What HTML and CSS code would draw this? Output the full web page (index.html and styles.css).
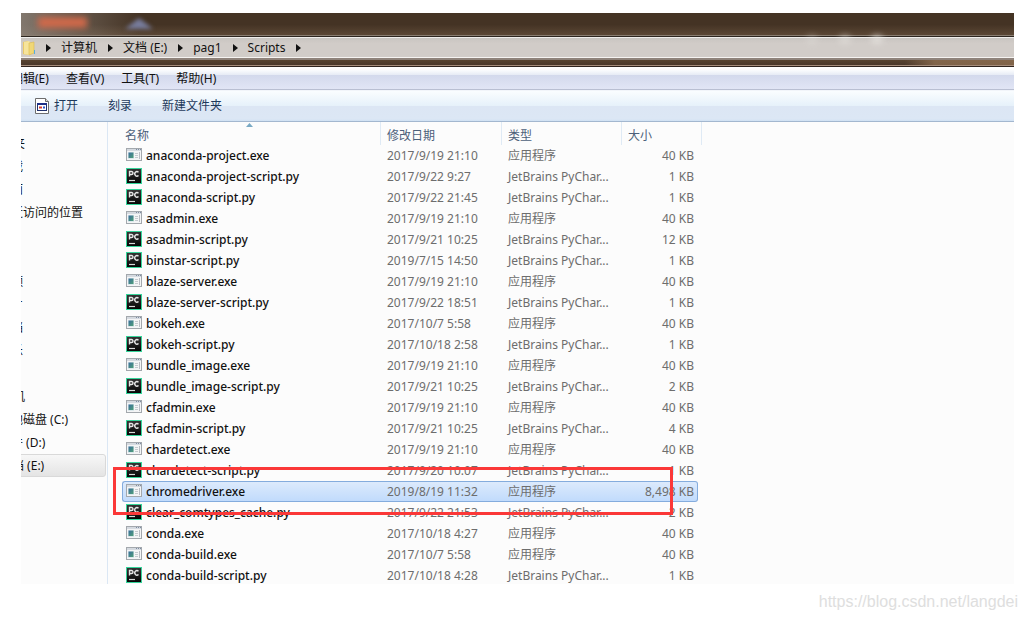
FILE: index.html
```html
<!DOCTYPE html>
<html lang="zh-CN">
<head>
<meta charset="utf-8">
<title>Scripts</title>
<link rel="stylesheet" href="styles.css">
</head>
<body>
<svg class="defs" aria-hidden="true">
  <defs>
    <linearGradient id="pane" x1="0" y1="0" x2="1" y2="1"><stop offset="0" stop-color="#3a6d9c"/><stop offset="1" stop-color="#4f9f78"/></linearGradient>
    <linearGradient id="dark" x1="0" y1="0" x2="0" y2="1"><stop offset="0" stop-color="#343434"/><stop offset="1" stop-color="#050505"/></linearGradient>
  </defs>
  <symbol id="exe" viewBox="0 0 16 16">
    <rect x=".5" y="1.5" width="15" height="12" fill="#f4f5f6" stroke="#a3a8ad"/>
    <path d="M1 2h14v2H1z" fill="#d5dae0"/>
    <path d="M10 2.500h1m1 0h1m1 0h1" stroke="#7e8da3"/>
    <path d="M2 5h6v7H2z" fill="#dce8ec"/>
    <path d="M2.500 5.500h5v5.500h-5z" fill="url(#pane)"/>
    <path d="M9 6.500h3M9 8.500h3M9 10.500h3" stroke="#c5cacf"/>
    <path d="M13.500 5v7" stroke="#b8bdc4"/>
  </symbol>
  <symbol id="py" viewBox="0 0 16 16">
    <rect width="16" height="16" fill="#35d49a"/>
    <rect x="1" y="1" width="14" height="14" fill="url(#dark)"/>
    <path d="M3.500 8.500v-5h2a1.500 1.500 0 0 1 0 3h-2M12.500 4.300a2.200 2.200 0 1 0 0 3.200" fill="none" stroke="#e6e6e6" stroke-width="1.400"/>
    <path d="M3 12.500h6" stroke="#d9d9d9" stroke-width="1.200"/>
  </symbol>
</svg>
<main class="window">
  <header class="glass">
    <span class="blob orange"></span><span class="blue"><span></span></span><span class="glow g1"></span><span class="glow g2"></span><span class="glow g3"></span>
  </header>
  <nav class="address" aria-label="地址">
    <svg class="folder" viewBox="0 0 13 16" aria-hidden="true"><path d="M0 2l5-1v14l-5-1z" fill="#e9c967"/><path d="M1 2l5-1 1 1v13l-6-1z" fill="#f6e49b"/><path d="M6 3l5-1v11l-5 2z" fill="#f0d777" stroke="#dcb94e" stroke-width=".6"/><path d="M11 10h1v4h-1z" fill="#58aee0"/></svg>
    <i class="arrow"></i><a href="#">计算机</a>
    <i class="arrow"></i><a href="#">文档 (E:)</a>
    <i class="arrow"></i><a href="#">pag1</a>
    <i class="arrow"></i><a href="#">Scripts</a>
    <i class="arrow"></i>
  </nav>
  <div class="frame"></div>
  <div class="menubar">
    <button>编辑(E)</button><button>查看(V)</button><button>工具(T)</button><button>帮助(H)</button>
  </div>
  <div class="toolbar">
    <button><svg class="open" viewBox="0 0 14 16" aria-hidden="true"><path d="M.5.500h10l3 3v12H.5z" fill="#fff" stroke="#6d6d6d"/><path d="M10.500.500v3h3" fill="#ddd" stroke="#6d6d6d"/><rect x="2.500" y="5.500" width="9" height="7" fill="#fff" stroke="#20306c"/><path d="M2 6h10" stroke="#1d2f86" stroke-width="2"/><path d="M4 9.500h3" stroke="#d23c32" stroke-width="2"/><path d="M8 9.500h2" stroke="#2d56c8" stroke-width="2"/></svg>打开</button><button>刻录</button><button>新建文件夹</button>
  </div>
  <div class="content">
    <aside class="tree">
      <ul class="favorites">
        <li class="root">夹</li><li>载</li><li>面</li><li>近访问的位置</li>
      </ul>
      <ul class="libraries"><li>频</li><li>片</li><li>档</li><li>乐</li></ul>
      <ul class="computer">
        <li class="root">机</li><li>地磁盘 (C:)</li><li>件 (D:)</li><li class="current">档 (E:)</li>
      </ul>
    </aside>
    <section class="listing">
      <svg class="sort" viewBox="0 0 7 4" aria-hidden="true"><path d="M0 4l3.500-4L7 4z" fill="#79a9c4"/></svg>
      <table>
        <colgroup><col class="c-name"><col class="c-date"><col class="c-type"><col class="c-size"><col class="c-end"></colgroup>
        <thead><tr><th>名称</th><th>修改日期</th><th>类型</th><th colspan="2">大小</th></tr></thead>
        <tbody>
          <tr><td><svg><use href="#exe"/></svg>anaconda-project.exe</td><td>2017/9/19 21:10</td><td>应用程序</td><td>40 KB</td></tr>
          <tr><td><svg><use href="#py"/></svg>anaconda-project-script.py</td><td>2017/9/22 9:27</td><td>JetBrains PyChar...</td><td>1 KB</td></tr>
          <tr><td><svg><use href="#py"/></svg>anaconda-script.py</td><td>2017/9/22 21:45</td><td>JetBrains PyChar...</td><td>1 KB</td></tr>
          <tr><td><svg><use href="#exe"/></svg>asadmin.exe</td><td>2017/9/19 21:10</td><td>应用程序</td><td>40 KB</td></tr>
          <tr><td><svg><use href="#py"/></svg>asadmin-script.py</td><td>2017/9/21 10:25</td><td>JetBrains PyChar...</td><td>12 KB</td></tr>
          <tr><td><svg><use href="#py"/></svg>binstar-script.py</td><td>2019/7/15 14:50</td><td>JetBrains PyChar...</td><td>1 KB</td></tr>
          <tr><td><svg><use href="#exe"/></svg>blaze-server.exe</td><td>2017/9/19 21:10</td><td>应用程序</td><td>40 KB</td></tr>
          <tr><td><svg><use href="#py"/></svg>blaze-server-script.py</td><td>2017/9/22 18:51</td><td>JetBrains PyChar...</td><td>1 KB</td></tr>
          <tr><td><svg><use href="#exe"/></svg>bokeh.exe</td><td>2017/10/7 5:58</td><td>应用程序</td><td>40 KB</td></tr>
          <tr><td><svg><use href="#py"/></svg>bokeh-script.py</td><td>2017/10/18 2:58</td><td>JetBrains PyChar...</td><td>1 KB</td></tr>
          <tr><td><svg><use href="#exe"/></svg>bundle_image.exe</td><td>2017/9/19 21:10</td><td>应用程序</td><td>40 KB</td></tr>
          <tr><td><svg><use href="#py"/></svg>bundle_image-script.py</td><td>2017/9/21 10:25</td><td>JetBrains PyChar...</td><td>2 KB</td></tr>
          <tr><td><svg><use href="#exe"/></svg>cfadmin.exe</td><td>2017/9/19 21:10</td><td>应用程序</td><td>40 KB</td></tr>
          <tr><td><svg><use href="#py"/></svg>cfadmin-script.py</td><td>2017/9/21 10:25</td><td>JetBrains PyChar...</td><td>4 KB</td></tr>
          <tr><td><svg><use href="#exe"/></svg>chardetect.exe</td><td>2017/9/19 21:10</td><td>应用程序</td><td>40 KB</td></tr>
          <tr><td><svg><use href="#py"/></svg>chardetect-script.py</td><td>2017/9/20 10:07</td><td>JetBrains PyChar...</td><td>1 KB</td></tr>
          <tr class="selected"><td><span class="marker"></span><svg><use href="#exe"/></svg>chromedriver.exe</td><td>2019/8/19 11:32</td><td>应用程序</td><td>8,498 KB</td></tr>
          <tr><td><svg><use href="#py"/></svg>clear_comtypes_cache.py</td><td>2017/9/22 21:53</td><td>JetBrains PyChar...</td><td>2 KB</td></tr>
          <tr><td><svg><use href="#exe"/></svg>conda.exe</td><td>2017/10/18 4:27</td><td>应用程序</td><td>40 KB</td></tr>
          <tr><td><svg><use href="#exe"/></svg>conda-build.exe</td><td>2017/10/7 5:58</td><td>应用程序</td><td>40 KB</td></tr>
          <tr><td><svg><use href="#py"/></svg>conda-build-script.py</td><td>2017/10/18 4:28</td><td>JetBrains PyChar...</td><td>1 KB</td></tr>
        </tbody>
      </table>
    </section>
  </div>
</main>
<footer class="watermark">https://blog.csdn.net/langdei</footer>
</body>
</html>
```
FILE: styles.css
```css
* { box-sizing: border-box; }
body {
  margin: 0;
  padding: 13px 12px 0 21px;
  background: #fff;
  color: #111;
  font: 12px/20px "Noto Sans", "Noto Sans CJK SC", sans-serif;
}
.defs { position: absolute; width: 0; height: 0; }
.window { overflow: hidden; background: #fcfcfc; }
button {
  display: flex;
  align-items: center;
  margin: 0;
  padding: 0;
  border: 0;
  background: none;
  color: inherit;
  font: inherit;
  white-space: nowrap;
}
a { color: inherit; text-decoration: none; }
ul { margin: 0; padding: 0; list-style: none; }

.glass {
  position: relative;
  height: 24px;
  border-bottom: 1px solid #2d2620;
  background:
    linear-gradient(90deg, rgba(150, 142, 134, .75), transparent 12%),
    linear-gradient(#443324 50%, #5d4937);
  box-shadow: inset 0 -1px #8a7e72;
}
.blob, .glow { position: absolute; filter: blur(3px); }
.orange { left: 17px; top: 4px; width: 49px; height: 11px; background: #d0694a; }
.blue { position: absolute; left: 104px; top: 5px; filter: blur(2px); }
.blue span { display: block; width: 28px; height: 11px; background: #777c9c; clip-path: polygon(50% 0, 100% 100%, 0 100%); }
.glow { top: 22px; z-index: 1; width: 12px; height: 9px; border-radius: 50%; background: #e9e6e2; opacity: .5; }
.g1 { right: 196px; opacity: .3; }
.g2 { right: 163px; }
.g3 { right: 131px; opacity: .7; }

.address {
  display: flex;
  align-items: center;
  height: 21px;
  padding-left: 2px;
  border-top: 1px solid #f0eeec;
  border-bottom: 1px solid #f5f3f1;
  background: linear-gradient(#c9c5c1, #d1ccc8 30%, #d1ccc8);
}
.folder { width: 13px; height: 16px; margin-right: 10px; }
.arrow {
  margin-right: 10px;
  border: 4px solid transparent;
  border-left: 5px solid #111;
  border-right: 0;
}
.address a { margin-right: 11px; }

.frame {
  height: 9px;
  border-top: 2px solid #8f837b;
  border-bottom: 1px solid #30241e;
  background: linear-gradient(90deg, transparent 89%, rgba(150, 117, 86, .7) 92%), linear-gradient(#58432f, #49362a);
  box-shadow: inset 0 -1px #a68d7b;
}

.menubar {
  display: flex;
  gap: 17px;
  height: 23px;
  padding-top: 2px;
  border-bottom: 1px solid #b9bfd2;
  background: linear-gradient(#fff 2px, #e6ebf5 8px, #d3d9ec 8px, #e1e5f5);
}
.menubar button:first-child { margin-left: -10px; }
.toolbar {
  display: flex;
  gap: 30px;
  height: 32px;
  padding-left: 14px;
  border-top: 1px solid #f2f5fa;
  border-bottom: 1px solid #a3b7cf;
  background: linear-gradient(#fafdff, #e6f1fa 15px, #dce6f4 15px, #dce7f5 28px, #cfe1f3);
  color: #1e395b;
}
.open { width: 14px; height: 16px; margin-right: 5px; }

.content { display: flex; }
.tree {
  flex: none;
  width: 87px;
  padding-top: 10px;
  overflow: hidden;
  border-right: 1px solid #dbe7f4;
}
.tree li {
  height: 23px;
  margin-left: -10px;
  line-height: 23px;
  white-space: nowrap;
}
.tree .root { margin-left: -8px; }
.libraries { margin-top: 46px; }
.computer { margin-top: 23px; }
.tree .current {
  margin-right: 1px;
  border: 1px solid #d9d9d9;
  border-radius: 3px;
  background: linear-gradient(#f7f7f7, #e4e4e4);
  line-height: 21px;
}

.listing {
  position: relative;
  flex: 1;
  height: 462px;
  padding-left: 14px;
  overflow: hidden;
}
.sort { position: absolute; left: 138px; top: 1px; width: 7px; height: 4px; }
table { table-layout: fixed; width: 580px; border-collapse: separate; border-spacing: 0; }
.c-name { width: 259px; }
.c-date { width: 121px; }
.c-type { width: 120px; }
.c-size { width: 76px; }
.c-end { width: 4px; }
th {
  height: 23px;
  padding: 4px 0 0 6px;
  border-right: 1px solid #dfeaf5;
  color: #4c607a;
  font-weight: 400;
  line-height: 18px;
  text-align: left;
}
th:first-child { padding-left: 3px; }
td {
  height: 21px;
  padding: 0 0 0 6px;
  border: 1px solid transparent;
  border-width: 1px 0;
  color: #6d6d6d;
  line-height: 19px;
  white-space: nowrap;
}
td:first-child { padding-left: 4px; color: #111; font-weight: 500; }
td:nth-child(4) { padding: 0 4px 0 0; text-align: right; }
td svg { width: 16px; height: 16px; margin-right: 4px; vertical-align: -3px; }
.selected td { border-color: #84acdd; background: linear-gradient(#dceafc, #c1dbfc); }
.selected td:first-child { position: relative; border-left-width: 1px; border-radius: 3px 0 0 3px; padding-left: 3px; }
.selected td:last-child { border-right-width: 1px; border-radius: 0 3px 3px 0; padding-right: 3px; }
.marker {
  position: absolute;
  left: -10px;
  top: -15px;
  z-index: 1;
  width: 560px;
  height: 48px;
  border: 3px solid #fb3838;
}
.watermark {
  padding-top: 8px;
  margin-right: -4px;
  color: #dedede;
  font: 16px/20px "Liberation Sans", sans-serif;
  text-align: right;
}
```
